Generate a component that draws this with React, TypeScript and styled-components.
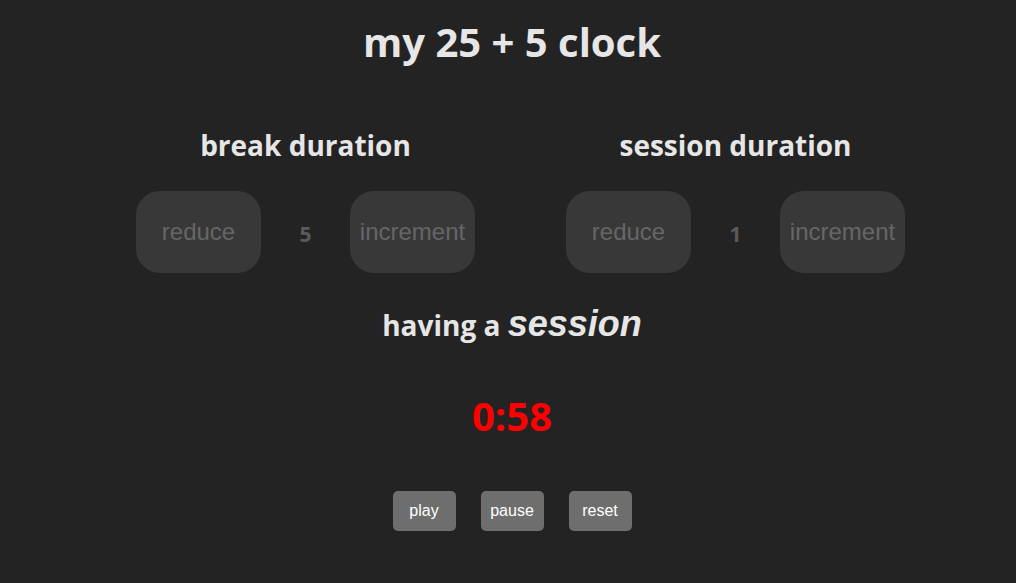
import React from "react";
import styled, { createGlobalStyle } from "styled-components";

const Global = createGlobalStyle`
  html, body { margin: 0; padding: 0; background: #232323; }
  body { font-family: "Open Sans", "Noto Sans", sans-serif; }
`;

const Page = styled.div`
  box-sizing: border-box;
  width: 1016px;
  height: 583px;
  padding-left: 8px;
  background: #232323;
  color: #e6e6e6;
  display: flex;
  flex-direction: column;
  align-items: center;
`;

const Title = styled.h1`
  margin: 19px 0 0;
  font-size: 40px;
  line-height: 46px;
  font-weight: 700;
`;

const Settings = styled.div`
  display: flex;
  gap: 91px;
  margin-top: 62px;
  margin-left: 17px;
`;

const Setting = styled.section`
  display: flex;
  flex-direction: column;
  align-items: center;
  width: 339px;
`;

const SettingLabel = styled.h2`
  margin: 0;
  font-size: 28px;
  line-height: 36px;
  font-weight: 700;
`;

const Controls = styled.div`
  display: flex;
  align-items: center;
  justify-content: space-between;
  width: 100%;
  margin-top: 28px;
`;

const Adjust = styled.button`
  width: 125px;
  height: 82px;
  border: none;
  border-radius: 24px;
  background: #383838;
  color: #666666;
  font-family: "Liberation Sans", Arial, sans-serif;
  font-size: 24px;
  padding: 0;
`;

const Value = styled.span`
  font-size: 21px;
  font-weight: 700;
  color: #5a5a5a;
  padding-top: 4px;
`;

const Status = styled.h2`
  margin: 29px 0 0;
  font-size: 28px;
  line-height: 44px;
  font-weight: 700;
`;

const Mode = styled.em`
  font-family: "Liberation Sans", Arial, sans-serif;
  font-size: 36px;
  font-style: italic;
  font-weight: 700;
`;

const Time = styled.div`
  margin-top: 45px;
  font-size: 40px;
  line-height: 48px;
  font-weight: 700;
  color: #ff0000;
`;

const Buttons = styled.div`
  display: flex;
  gap: 25px;
  margin-top: 51px;
`;

const Action = styled.button`
  width: 63px;
  height: 40px;
  border: none;
  border-radius: 5px;
  background: #6e6e6e;
  color: #ffffff;
  font-family: "Liberation Sans", Arial, sans-serif;
  font-size: 16px;
  padding: 0;
`;

export default function App() {
  return (
    <Page>
      <Global />
      <Title>my 25 + 5 clock</Title>
      <Settings>
        <Setting>
          <SettingLabel>break duration</SettingLabel>
          <Controls>
            <Adjust>reduce</Adjust>
            <Value>5</Value>
            <Adjust>increment</Adjust>
          </Controls>
        </Setting>
        <Setting>
          <SettingLabel>session duration</SettingLabel>
          <Controls>
            <Adjust>reduce</Adjust>
            <Value>1</Value>
            <Adjust>increment</Adjust>
          </Controls>
        </Setting>
      </Settings>
      <Status>
        having a <Mode>session</Mode>
      </Status>
      <Time>0:58</Time>
      <Buttons>
        <Action>play</Action>
        <Action>pause</Action>
        <Action>reset</Action>
      </Buttons>
    </Page>
  );
}
